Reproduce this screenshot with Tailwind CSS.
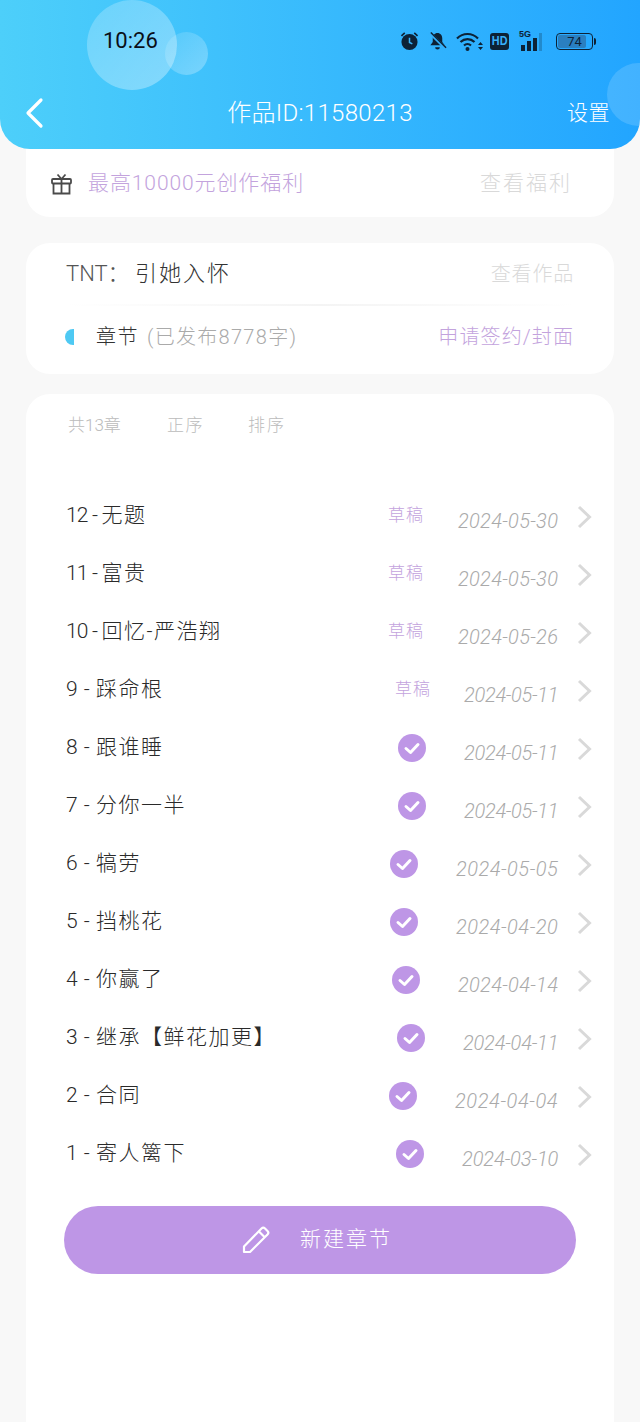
<!DOCTYPE html>
<html lang="zh-CN">

<head>
  <meta charset="UTF-8" />
  <meta name="viewport" content="width=device-width, initial-scale=1" />
  <title>作品详情</title>
  <script src="https://cdn.jsdelivr.net/npm/@tailwindcss/browser@4"></script>
</head>

<body class="bg-[#f8f8f8] h-[1422px] overflow-hidden flex flex-col font-['Roboto','Noto_Sans_CJK_SC',sans-serif] font-light">
  <!-- Header -->
  <header class="relative z-10 h-[149px] shrink-0 overflow-hidden rounded-b-[30px] bg-gradient-to-r from-[#4dcffa] to-[#22a5ff]">
    <div class="absolute left-[87px] top-0 w-[90px] h-[90px] rounded-full bg-gradient-to-br from-white/20 to-white/35"></div>
    <div class="absolute left-[165px] top-[32px] w-[43px] h-[43px] rounded-full bg-gradient-to-br from-white/10 to-white/30"></div>
    <div class="absolute left-[607px] top-[63px] w-[63px] h-[63px] rounded-full bg-white/15"></div>

    <!-- Status bar -->
    <div class="relative h-[83px] flex items-start">
      <span class="ml-[103px] mt-[27px] text-[22px] leading-[28px] font-normal text-[#0a0f18] font-['Roboto',sans-serif]">10:26</span>
      <div class="ml-auto mr-[44px] mt-[30px] flex items-center h-[22px] text-[#0d2236]">
        <svg class="w-[19px] h-[20px]" viewBox="0 0 20 20"><circle cx="10" cy="11" r="8.5" fill="currentColor"/><path d="M10 6.5V11.5L13 13" stroke="#3ab4fb" stroke-width="1.6" fill="none"/><path d="M1.5 4.5 5 1.5M18.5 4.5 15 1.5" stroke="currentColor" stroke-width="1.8"/></svg>
        <svg class="ml-[9px] w-[19px] h-[20px]" viewBox="0 0 20 20"><path d="M10 1.5c-3 0-5 2.4-5 5.5v4L2.5 14.500h15L15 11V7c0-3.100-2-5.500-5-5.500Z" fill="currentColor"/><path d="M7.500 16.500a2.500 2.500 0 0 0 5 0Z" fill="currentColor"/><path d="M2 1.500 18.500 18" stroke="#35b0fc" stroke-width="3"/><path d="M3 1 19 17" stroke="currentColor" stroke-width="1.500"/></svg>
        <svg class="ml-[9px] w-[27px] h-[21px]" viewBox="0 0 27 21"><path d="M1 7.500C7 1.500 16 1.500 22 7.500M4.500 11C8.500 7.200 14.500 7.200 18.500 11M8 14.500c2-1.800 5-1.800 7 0" stroke="currentColor" stroke-width="2.200" fill="none"/><circle cx="11.500" cy="18" r="2" fill="currentColor"/><path d="M22 14h5l-2.500-3ZM22 16h5l-2.500 3Z" fill="currentColor"/></svg>
        <span class="ml-[7px] w-[19px] h-[17px] rounded-[3px] bg-current flex items-center justify-center"><span class="text-[12px] leading-none font-bold text-[#38b1fc] font-['Liberation_Sans',sans-serif] scale-x-90">HD</span></span>
        <div class="relative ml-[10px] w-[27px] h-[20px] flex items-end gap-[2px]">
          <span class="absolute left-0 top-[-2px] text-[9px] leading-[10px] font-bold font-['Liberation_Sans',sans-serif]">5G</span>
          <i class="ml-[2px] w-[4px] h-[6px] bg-current"></i><i class="w-[4px] h-[10px] bg-current"></i><i class="w-[4px] h-[13px] bg-current"></i><i class="w-[3px] h-[18px] bg-current/25"></i>
        </div>
        <div class="ml-[10px] w-[37px] h-[17px] rounded-[4px] border border-current p-[1px] relative">
          <div class="w-[28px] h-full rounded-[2px] bg-[#2a7fc0]"></div>
          <span class="absolute inset-0 text-center text-[13px] leading-[15px] font-normal font-['Roboto',sans-serif]">74</span>
        </div>
        <i class="ml-[1px] w-[2px] h-[7px] rounded-r-sm bg-current"></i>
      </div>
    </div>

    <!-- Nav -->
    <div class="relative flex items-center h-[60px] text-white">
      <svg class="absolute left-[24px] top-[14px] w-[20px] h-[32px]" viewBox="0 0 20 32"><path d="M17 3 4 16 17 29" stroke="white" stroke-width="3.200" stroke-linecap="round" stroke-linejoin="round" fill="none"/></svg>
      <h1 class="w-full text-center text-[24px] leading-[30px] font-light tracking-[0.3px]">作品ID:11580213</h1>
      <span class="absolute left-[567px] text-[21px] leading-[30px] tracking-[0.5px]">设置</span>
    </div>
  </header>

  <!-- Welfare card -->
  <section class="mx-[26px] h-[68px] shrink-0 rounded-b-[24px] bg-white flex items-center pl-[25px] pr-[42px]">
    <svg class="w-[21px] h-[22px] mt-[2px] text-[#4a4a4a]" viewBox="0 0 21 22" fill="none" stroke="currentColor" stroke-width="1.800"><rect x="1" y="6" width="19" height="4.500" rx="1"/><path d="M2.500 10.500V20.500H18.500V10.500M10.500 6V20.500"/><path d="M10.500 6 6.500 1.500M10.500 6 14.500 1.500"/></svg>
    <span class="ml-[16px] text-[21px] leading-[28px] tracking-[0.9px] text-[#c3a3dd]">最高10000元创作福利</span>
    <span class="ml-auto text-[21px] leading-[28px] tracking-[2px] text-[#d9d9d9]">查看福利</span>
  </section>

  <!-- Book card -->
  <section class="mx-[26px] mt-[26px] h-[131px] shrink-0 rounded-[24px] bg-white px-[40px] flex flex-col">
    <div class="h-[61px] flex items-center">
      <span class="text-[22px] leading-[28px] text-[#555]">TNT： <span class="tracking-[2px] text-[#333]">引她入怀</span></span>
      <span class="ml-auto text-[20px] leading-[26px] tracking-[0.800px] text-[#d9d9d9]">查看作品</span>
    </div>
    <div class="h-[2px] bg-gradient-to-r from-white via-[#f4f4f4] to-white"></div>
    <div class="flex items-center h-[62px]">
      <i class="ml-[-1px] w-[9px] h-[16px] rounded-l-full bg-[#4ec9f3]"></i>
      <span class="ml-[22px] text-[20px] leading-[28px] tracking-[1.500px] text-[#333]">章节</span>
      <span class="ml-[8px] text-[20px] leading-[28px] tracking-[1.300px] text-[#aaa]">(已发布8778字)</span>
      <span class="ml-auto text-[20px] leading-[28px] tracking-[1.100px] text-[#c3a3dd]">申请签约/封面</span>
    </div>
  </section>

  <!-- Chapter card -->
  <section class="mx-[26px] mt-[20px] flex-1 rounded-t-[24px] bg-white pl-[40px] pr-[22px]">
    <div class="h-[92px] pt-[19px] flex items-start text-[17px] leading-[24px] text-[#bbb]">
      <span class="w-[101px] pl-[2px]">共13章</span>
      <span class="w-[81px] tracking-[1.500px]">正序</span>
      <span class="tracking-[2px]">排序</span>
    </div>

    <ul>
      <li class="h-[58px] flex items-center">
        <span class="mt-[2px] text-[21px] tracking-[1.500px] text-[#2a2a2a]"><span class="tracking-[-0.8px]">12 - </span>无题</span>
        <span class="ml-auto mt-[2px] text-[17px] tracking-[1px] text-[#c3a3dd]">草稿</span>
        <span class="ml-[34px] w-[100px] mt-[12px] whitespace-nowrap text-right text-[20px] tracking-[0.3px] italic text-[#aaa]">2024-05-30</span>
        <svg class="ml-[19px] w-[15px] h-[24px] mt-[4px]" viewBox="0 0 15 24"><path d="M2 2 12.500 12 2 22" stroke="#d9d9d9" stroke-width="3" fill="none"/></svg>
      </li>
      <li class="h-[58px] flex items-center">
        <span class="mt-[2px] text-[21px] tracking-[1.500px] text-[#2a2a2a]"><span class="tracking-[-0.8px]">11 - </span>富贵</span>
        <span class="ml-auto mt-[2px] text-[17px] tracking-[1px] text-[#c3a3dd]">草稿</span>
        <span class="ml-[34px] w-[100px] mt-[12px] whitespace-nowrap text-right text-[20px] tracking-[0.3px] italic text-[#aaa]">2024-05-30</span>
        <svg class="ml-[19px] w-[15px] h-[24px] mt-[4px]" viewBox="0 0 15 24"><path d="M2 2 12.500 12 2 22" stroke="#d9d9d9" stroke-width="3" fill="none"/></svg>
      </li>
      <li class="h-[58px] flex items-center">
        <span class="mt-[2px] text-[21px] tracking-[1.500px] text-[#2a2a2a]"><span class="tracking-[-0.8px]">10 - </span>回忆-严浩翔</span>
        <span class="ml-auto mt-[2px] text-[17px] tracking-[1px] text-[#c3a3dd]">草稿</span>
        <span class="ml-[34px] w-[100px] mt-[12px] whitespace-nowrap text-right text-[20px] tracking-[0.3px] italic text-[#aaa]">2024-05-26</span>
        <svg class="ml-[19px] w-[15px] h-[24px] mt-[4px]" viewBox="0 0 15 24"><path d="M2 2 12.500 12 2 22" stroke="#d9d9d9" stroke-width="3" fill="none"/></svg>
      </li>
      <li class="h-[58px] flex items-center">
        <span class="mt-[2px] text-[21px] tracking-[1.500px] text-[#2a2a2a]"><span class="tracking-[0.5px]">9 - </span>踩命根</span>
        <span class="ml-auto mt-[2px] text-[17px] tracking-[1px] text-[#c3a3dd]">草稿</span>
        <span class="ml-[33px] w-[94px] mt-[12px] whitespace-nowrap text-right text-[20px] tracking-[-0.3px] italic text-[#aaa]">2024-05-11</span>
        <svg class="ml-[19px] w-[15px] h-[24px] mt-[4px]" viewBox="0 0 15 24"><path d="M2 2 12.500 12 2 22" stroke="#d9d9d9" stroke-width="3" fill="none"/></svg>
      </li>
      <li class="h-[58px] flex items-center">
        <span class="mt-[2px] text-[21px] tracking-[1.500px] text-[#2a2a2a]"><span class="tracking-[0.5px]">8 - </span>跟谁睡</span>
        <svg class="ml-auto mt-[2px] w-[28px] h-[28px]" viewBox="0 0 28 28"><circle cx="14" cy="14" r="14" fill="#be96e6"/><path d="M8 14.500 12.500 18.500 20 10.500" stroke="white" stroke-width="3" stroke-linecap="round" stroke-linejoin="round" fill="none"/></svg>
        <span class="ml-[38px] w-[94px] mt-[12px] whitespace-nowrap text-right text-[20px] tracking-[-0.3px] italic text-[#aaa]">2024-05-11</span>
        <svg class="ml-[19px] w-[15px] h-[24px] mt-[4px]" viewBox="0 0 15 24"><path d="M2 2 12.500 12 2 22" stroke="#d9d9d9" stroke-width="3" fill="none"/></svg>
      </li>
      <li class="h-[58px] flex items-center">
        <span class="mt-[2px] text-[21px] tracking-[1.500px] text-[#2a2a2a]"><span class="tracking-[0.5px]">7 - </span>分你一半</span>
        <svg class="ml-auto mt-[2px] w-[28px] h-[28px]" viewBox="0 0 28 28"><circle cx="14" cy="14" r="14" fill="#be96e6"/><path d="M8 14.500 12.500 18.500 20 10.500" stroke="white" stroke-width="3" stroke-linecap="round" stroke-linejoin="round" fill="none"/></svg>
        <span class="ml-[38px] w-[94px] mt-[12px] whitespace-nowrap text-right text-[20px] tracking-[-0.3px] italic text-[#aaa]">2024-05-11</span>
        <svg class="ml-[19px] w-[15px] h-[24px] mt-[4px]" viewBox="0 0 15 24"><path d="M2 2 12.500 12 2 22" stroke="#d9d9d9" stroke-width="3" fill="none"/></svg>
      </li>
      <li class="h-[58px] flex items-center">
        <span class="mt-[2px] text-[21px] tracking-[1.500px] text-[#2a2a2a]"><span class="tracking-[0.5px]">6 - </span>犒劳</span>
        <svg class="ml-auto mt-[2px] w-[28px] h-[28px]" viewBox="0 0 28 28"><circle cx="14" cy="14" r="14" fill="#be96e6"/><path d="M8 14.500 12.500 18.500 20 10.500" stroke="white" stroke-width="3" stroke-linecap="round" stroke-linejoin="round" fill="none"/></svg>
        <span class="ml-[38px] w-[102px] mt-[12px] whitespace-nowrap text-right text-[20px] tracking-[0.5px] italic text-[#aaa]">2024-05-05</span>
        <svg class="ml-[19px] w-[15px] h-[24px] mt-[4px]" viewBox="0 0 15 24"><path d="M2 2 12.500 12 2 22" stroke="#d9d9d9" stroke-width="3" fill="none"/></svg>
      </li>
      <li class="h-[58px] flex items-center">
        <span class="mt-[2px] text-[21px] tracking-[1.500px] text-[#2a2a2a]"><span class="tracking-[0.5px]">5 - </span>挡桃花</span>
        <svg class="ml-auto mt-[2px] w-[28px] h-[28px]" viewBox="0 0 28 28"><circle cx="14" cy="14" r="14" fill="#be96e6"/><path d="M8 14.500 12.500 18.500 20 10.500" stroke="white" stroke-width="3" stroke-linecap="round" stroke-linejoin="round" fill="none"/></svg>
        <span class="ml-[38px] w-[102px] mt-[12px] whitespace-nowrap text-right text-[20px] tracking-[0.5px] italic text-[#aaa]">2024-04-20</span>
        <svg class="ml-[19px] w-[15px] h-[24px] mt-[4px]" viewBox="0 0 15 24"><path d="M2 2 12.500 12 2 22" stroke="#d9d9d9" stroke-width="3" fill="none"/></svg>
      </li>
      <li class="h-[58px] flex items-center">
        <span class="mt-[2px] text-[21px] tracking-[1.500px] text-[#2a2a2a]"><span class="tracking-[0.5px]">4 - </span>你赢了</span>
        <svg class="ml-auto mt-[2px] w-[28px] h-[28px]" viewBox="0 0 28 28"><circle cx="14" cy="14" r="14" fill="#be96e6"/><path d="M8 14.500 12.500 18.500 20 10.500" stroke="white" stroke-width="3" stroke-linecap="round" stroke-linejoin="round" fill="none"/></svg>
        <span class="ml-[38px] w-[100px] mt-[12px] whitespace-nowrap text-right text-[20px] tracking-[0.3px] italic text-[#aaa]">2024-04-14</span>
        <svg class="ml-[19px] w-[15px] h-[24px] mt-[4px]" viewBox="0 0 15 24"><path d="M2 2 12.500 12 2 22" stroke="#d9d9d9" stroke-width="3" fill="none"/></svg>
      </li>
      <li class="h-[58px] flex items-center">
        <span class="mt-[2px] text-[21px] tracking-[1.500px] text-[#2a2a2a]"><span class="tracking-[0.5px]">3 - </span>继承【鲜花加更】</span>
        <svg class="ml-auto mt-[2px] w-[28px] h-[28px]" viewBox="0 0 28 28"><circle cx="14" cy="14" r="14" fill="#be96e6"/><path d="M8 14.500 12.500 18.500 20 10.500" stroke="white" stroke-width="3" stroke-linecap="round" stroke-linejoin="round" fill="none"/></svg>
        <span class="ml-[38px] w-[95px] mt-[12px] whitespace-nowrap text-right text-[20px] tracking-[-0.2px] italic text-[#aaa]">2024-04-11</span>
        <svg class="ml-[19px] w-[15px] h-[24px] mt-[4px]" viewBox="0 0 15 24"><path d="M2 2 12.500 12 2 22" stroke="#d9d9d9" stroke-width="3" fill="none"/></svg>
      </li>
      <li class="h-[58px] flex items-center">
        <span class="mt-[2px] text-[21px] tracking-[1.500px] text-[#2a2a2a]"><span class="tracking-[0.5px]">2 - </span>合同</span>
        <svg class="ml-auto mt-[2px] w-[28px] h-[28px]" viewBox="0 0 28 28"><circle cx="14" cy="14" r="14" fill="#be96e6"/><path d="M8 14.500 12.500 18.500 20 10.500" stroke="white" stroke-width="3" stroke-linecap="round" stroke-linejoin="round" fill="none"/></svg>
        <span class="ml-[38px] w-[103px] mt-[12px] whitespace-nowrap text-right text-[20px] tracking-[0.6px] italic text-[#aaa]">2024-04-04</span>
        <svg class="ml-[19px] w-[15px] h-[24px] mt-[4px]" viewBox="0 0 15 24"><path d="M2 2 12.500 12 2 22" stroke="#d9d9d9" stroke-width="3" fill="none"/></svg>
      </li>
      <li class="h-[58px] flex items-center">
        <span class="mt-[2px] text-[21px] tracking-[1.500px] text-[#2a2a2a]"><span class="tracking-[0.5px]">1 - </span>寄人篱下</span>
        <svg class="ml-auto mt-[2px] w-[28px] h-[28px]" viewBox="0 0 28 28"><circle cx="14" cy="14" r="14" fill="#be96e6"/><path d="M8 14.500 12.500 18.500 20 10.500" stroke="white" stroke-width="3" stroke-linecap="round" stroke-linejoin="round" fill="none"/></svg>
        <span class="ml-[38px] w-[96px] mt-[12px] whitespace-nowrap text-right text-[20px] tracking-[-0.1px] italic text-[#aaa]">2024-03-10</span>
        <svg class="ml-[19px] w-[15px] h-[24px] mt-[4px]" viewBox="0 0 15 24"><path d="M2 2 12.500 12 2 22" stroke="#d9d9d9" stroke-width="3" fill="none"/></svg>
      </li>
    </ul>

    <button class="mt-[24px] ml-[-2px] w-[512px] h-[68px] pr-[6px] rounded-full bg-[#be96e6] flex items-center justify-center text-white">
      <svg class="w-[28px] h-[28px] mr-[30px]" viewBox="0 0 28 28" fill="none" stroke="white" stroke-width="2.200" stroke-linejoin="round"><path d="M2 20.500 19.500 2.500a2.500 2.500 0 0 1 3.500 0l2.500 2.500a2.500 2.500 0 0 1 0 3.500L8 26H2Z"/><path d="M17 5.500 22.500 11"/></svg>
      <span class="text-[21px] tracking-[2px]">新建章节</span>
    </button>
  </section>
</body>

</html>
